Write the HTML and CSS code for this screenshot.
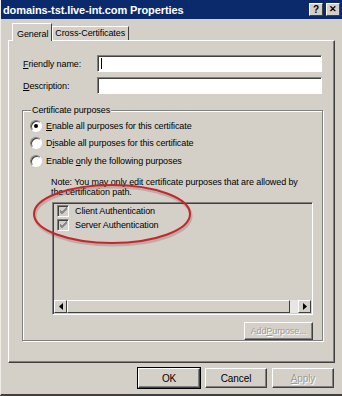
FILE: index.html
```html
<!DOCTYPE html>
<html>
<head>
<meta charset="utf-8">
<link rel="stylesheet" href="styles.css">
</head>
<body>
<div class="window">
  <div class="titlebar">
    <span class="title">domains-tst.live-int.com Properties</span>
    <div class="tbtns">
      <span class="tbtn">?</span>
      <span class="tbtn x">✕</span>
    </div>
  </div>
  <div class="body">
    <div class="tabs">
      <div class="tab active">General</div>
      <div class="tab">Cross-Certificates</div>
    </div>
    <div class="panel">
      <div class="row">
        <label class="lbl"><u>F</u>riendly name:</label>
        <div class="input"><span class="caret"></span></div>
      </div>
      <div class="row">
        <label class="lbl"><u>D</u>escription:</label>
        <div class="input"></div>
      </div>
      <fieldset class="group">
        <legend>Certificate purposes</legend>
        <div class="radio"><span class="rb on"></span><span><u>E</u>nable all purposes for this certificate</span></div>
        <div class="radio"><span class="rb"></span><span>D<u>i</u>sable all purposes for this certificate</span></div>
        <div class="radio"><span class="rb"></span><span>Enable <u>o</u>nly the following purposes</span></div>
        <div class="note">Note: You may only edit certificate purposes that are allowed by<br>the certification path.</div>
        <div class="list">
          <div class="items">
            <div class="item"><span class="cb"><svg width="9" height="9" viewBox="0 0 9 9"><path d="M1 4 L3 6 L8 1 M1 5 L3 7 L8 2 M1 6 L3 8 L8 3" stroke="#8a8a8a" stroke-width="1" fill="none"/></svg></span>Client Authentication</div>
            <div class="item"><span class="cb"><svg width="9" height="9" viewBox="0 0 9 9"><path d="M1 4 L3 6 L8 1 M1 5 L3 7 L8 2 M1 6 L3 8 L8 3" stroke="#8a8a8a" stroke-width="1" fill="none"/></svg></span>Server Authentication</div>
          </div>
          <div class="hscroll">
            <span class="sbtn"><svg width="4" height="7" viewBox="0 0 4 7"><path d="M4 0 L0 3.5 L4 7Z" fill="#000"/></svg></span>
            <span class="thumb"></span>
            <span class="track"></span>
            <span class="sbtn"><svg width="4" height="7" viewBox="0 0 4 7"><path d="M0 0 L4 3.5 L0 7Z" fill="#000"/></svg></span>
          </div>
        </div>
        <div class="addrow"><span class="btn small disabled">Add <u>P</u>urpose...</span></div>
      </fieldset>
      <svg class="circle" width="166" height="66" viewBox="0 0 166 66">
        <ellipse cx="81" cy="31" rx="78" ry="29" fill="none" stroke="rgba(120,40,40,0.22)" stroke-width="3" transform="translate(1,2)"/>
        <ellipse cx="81" cy="31" rx="78" ry="29" fill="none" stroke="#c4262b" stroke-width="2"/>
      </svg>
    </div>
    <div class="buttons">
      <span class="btn default">OK</span>
      <span class="btn">Cancel</span>
      <span class="btn disabled"><u>A</u>pply</span>
    </div>
  </div>
</div>
</body>
</html>
```
FILE: styles.css
```css
* { box-sizing: border-box; }
html, body { margin: 0; padding: 0; }
body {
  width: 342px; height: 396px; overflow: hidden;
  background: #d4d0c8;
  font-family: "Liberation Sans", Arial, sans-serif;
  font-size: 9px;
  letter-spacing: -0.1px;
  color: #000;
}
.window {
  width: 342px; height: 396px;
  display: flex; flex-direction: column;
  border-left: 1px solid #f0eee8;
  border-bottom: 2px solid #404040;
  background: #d4d0c8;
}
.titlebar {
  height: 19px;
  background: #0b2a6c;
  color: #fff;
  display: flex; align-items: center; justify-content: space-between;
  padding: 0 2px 0 2px;
}
.title { font-weight: bold; font-size: 11px; letter-spacing: -0.1px; }
.tbtns { display: flex; gap: 3px; }
.tbtn {
  width: 14px; height: 13px;
  background: #d4d0c8;
  color: #000;
  font-weight: bold; font-size: 10px; line-height: 11px; text-align: center;
  border: 1px solid; border-color: #fff #404040 #404040 #fff;
}
.tbtn.x { font-size: 9px; }
.body { flex: 1; display: flex; flex-direction: column; padding: 3px 7px 0 7px; }
.tabs { display: flex; align-items: flex-end; padding-left: 4px; height: 18px; }
.tab {
  height: 14px; padding: 0 3px 0 2px;
  border: 1px solid; border-color: #fff #404040 transparent #fff;
  border-bottom: none;
  line-height: 13px;
}
.tab.active { height: 18px; padding: 4px 3px 0 4px; margin-bottom: -1px; background: #d4d0c8; position: relative; z-index: 1; }
.panel {
  position: relative;
  height: 323px;
  border: 1px solid; border-color: #fff #404040 #404040 #fff;
  box-shadow: inset -1px -1px 0 #808080;
  padding: 14px 11px 0 13px;
}
.row { display: flex; align-items: center; height: 17px; margin-bottom: 5px; }
.lbl { width: 75px; padding-left: 1px; }
.input {
  flex: 1; height: 17px; margin-right: 1px;
  background: #fff;
  border: 1px solid; border-color: #808080 #fff #fff #808080;
  box-shadow: inset 1px 1px 0 #404040;
}
.caret { display: block; width: 1px; height: 11px; background: #000; margin: 2px 0 0 3px; }
.group {
  margin: 11px 0 0 0;
  padding: 1px 9px 0 6px;
  height: 236px;
  border: 1px solid #808080;
  box-shadow: inset 1px 1px 0 #fff, 1px 1px 0 #fff;
}
.group legend { padding: 0 1px; margin-left: 2px; background: #d4d0c8; line-height: 11px; }
.radio { display: flex; align-items: center; height: 17.5px; gap: 4px; padding-left: 1px; }
.rb {
  width: 12px; height: 12px; border-radius: 50%;
  background: #fff;
  border: 1px solid; border-color: #808080 #fff #fff #808080;
  box-shadow: inset 1px 1px 0 #404040;
  position: relative;
}
.rb.on::after { content: ""; position: absolute; left: 3px; top: 3px; width: 4px; height: 4px; border-radius: 50%; background: #000; }
.note { padding-left: 22px; margin-top: 7px; line-height: 10px; }
.list {
  margin: 5px 0 0 23px;
  height: 113px;
  border: 1px solid; border-color: #808080 #fff #fff #808080;
  box-shadow: inset 1px 1px 0 #404040;
  display: flex; flex-direction: column;
  padding: 1px 1px 1px 1px;
}
.items { flex: 1; padding: 0 0 0 3px; }
.item { display: flex; align-items: center; height: 14px; gap: 6px; color: #000; }
.cb {
  width: 12px; height: 12px;
  border: 1px solid; border-color: #808080 #fff #fff #808080;
  box-shadow: inset 1px 1px 0 #404040;
  background: #d4d0c8;
  display: flex; align-items: center; justify-content: center;
}
.hscroll { display: flex; height: 13px; }
.sbtn {
  width: 13px; height: 13px;
  background: #d4d0c8;
  border: 1px solid; border-color: #fff #404040 #404040 #fff;
  display: flex; align-items: center; justify-content: center;
}
.thumb {
  width: 223px; height: 13px; background: #d4d0c8;
  border: 1px solid; border-color: #fff #404040 #404040 #fff;
}
.track { flex: 1; background: #e8e6e2; }
.addrow { display: flex; justify-content: flex-end; margin-top: 7px; }
.btn {
  display: flex; align-items: center; justify-content: center;
  width: 62px; height: 20px;
  background: #d4d0c8;
  border: 1px solid; border-color: #fff #404040 #404040 #fff;
  box-shadow: inset -1px -1px 0 #808080;
  font-size: 10px;
}
.btn.small { width: 69px; height: 18px; font-size: 9px; }
.btn.disabled { color: #a09c94; text-shadow: 1px 1px 0 #fff; }
.btn.default { outline: 1px solid #000; }
.buttons { display: flex; justify-content: flex-end; gap: 5px; padding: 5px 1px 0 0; }
.circle { position: absolute; left: 22px; top: 142px; }
```
